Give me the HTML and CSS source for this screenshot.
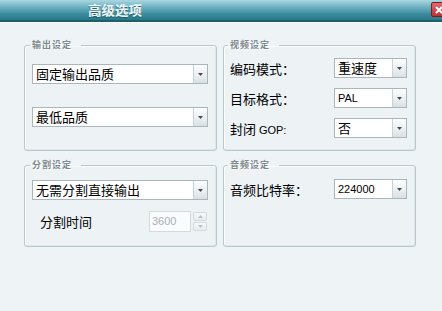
FILE: index.html
```html
<!DOCTYPE html>
<html>
<head>
<meta charset="utf-8">
<link rel="stylesheet" href="styles.css">
</head>
<body>
<div class="titlebar">
  <div class="title">高级选项</div>
  <div class="close"><svg width="8" height="8" viewBox="0 0 8 8"><path d="M1 1L7 7M7 1L1 7" stroke="#fff" stroke-width="2"/></svg></div>
</div>
<div class="content">
  <fieldset class="panel left">
    <legend>输出设定</legend>
    <div class="stack">
      <div class="combo"><span class="val cjk">固定输出品质</span><span class="btn"><svg width="5" height="3" viewBox="0 0 5 3"><path d="M0 0H5L2.5 3Z" fill="#4a4a4a"/></svg></span></div>
      <div class="combo"><span class="val cjk">最低品质</span><span class="btn"><svg width="5" height="3" viewBox="0 0 5 3"><path d="M0 0H5L2.5 3Z" fill="#4a4a4a"/></svg></span></div>
    </div>
  </fieldset>
  <fieldset class="panel right">
    <legend>视频设定</legend>
    <div class="rows">
      <div class="row"><span class="label">编码模式：</span><div class="combo small"><span class="val cjk">重速度</span><span class="btn"><svg width="5" height="3" viewBox="0 0 5 3"><path d="M0 0H5L2.5 3Z" fill="#4a4a4a"/></svg></span></div></div>
      <div class="row"><span class="label">目标格式：</span><div class="combo small"><span class="val latin">PAL</span><span class="btn"><svg width="5" height="3" viewBox="0 0 5 3"><path d="M0 0H5L2.5 3Z" fill="#4a4a4a"/></svg></span></div></div>
      <div class="row"><span class="label">封闭 <span class="latin-l">GOP:</span></span><div class="combo small"><span class="val cjk">否</span><span class="btn"><svg width="5" height="3" viewBox="0 0 5 3"><path d="M0 0H5L2.5 3Z" fill="#4a4a4a"/></svg></span></div></div>
    </div>
  </fieldset>
  <fieldset class="panel left bottom">
    <legend>分割设定</legend>
    <div class="combo"><span class="val cjk">无需分割直接输出</span><span class="btn"><svg width="5" height="3" viewBox="0 0 5 3"><path d="M0 0H5L2.5 3Z" fill="#4a4a4a"/></svg></span></div>
    <div class="spinrow">
      <span class="label">分割时间</span>
      <div class="spin">
        <div class="spinbox">3600</div>
        <div class="spinbtns">
          <span class="sb"><svg width="5" height="3" viewBox="0 0 5 3"><path d="M0 3H5L2.5 0Z" fill="#b8c2c6"/></svg></span>
          <span class="sb"><svg width="5" height="3" viewBox="0 0 5 3"><path d="M0 0H5L2.5 3Z" fill="#b8c2c6"/></svg></span>
        </div>
      </div>
    </div>
  </fieldset>
  <fieldset class="panel right bottom">
    <legend>音频设定</legend>
    <div class="row"><span class="label">音频比特率：</span><div class="combo small"><span class="val latin">224000</span><span class="btn"><svg width="5" height="3" viewBox="0 0 5 3"><path d="M0 0H5L2.5 3Z" fill="#4a4a4a"/></svg></span></div></div>
  </fieldset>
</div>
</body>
</html>
```
FILE: styles.css
```css
html, body {
  margin: 0;
  padding: 0;
}
body {
  width: 442px;
  height: 311px;
  overflow: hidden;
  background: #eef3f6;
  font-family: "Noto Sans CJK SC", "Noto Sans", sans-serif;
  color: #000;
}
.titlebar {
  height: 20px;
  display: flex;
  align-items: flex-start;
  background: linear-gradient(#a9d7e1 0%, #6fb2c1 35%, #3a8c9d 70%, #2a7888 100%);
  border-bottom: 2px solid #1e5f6c;
  box-shadow: 0 1px 0 #fafcfd;
  overflow: hidden;
}
.title {
  padding-left: 88px;
  font-size: 13px;
  font-weight: 700;
  line-height: 20px;
  color: #e9f5f8;
  text-shadow: 0 1px 1px #1e5664, 0.5px 0 0 #e9f5f8;
  letter-spacing: 0.5px;
  flex: 1;
}
.close {
  width: 14px;
  height: 13px;
  margin-top: 2px;
  margin-right: -5px;
  background: linear-gradient(#e06a6e, #b83338);
  border: 1px solid #7a1d22;
  border-radius: 2px;
  display: flex;
  align-items: center;
  justify-content: center;
}
.content {
  display: grid;
  grid-template-columns: 193px 193px;
  grid-template-rows: 111px 87px;
  column-gap: 6px;
  row-gap: 9px;
  padding: 18px 0 0 24px;
}
.panel {
  margin: 0;
  min-width: 0;
  border: 1px solid #b9c8cd;
  border-radius: 3px;
  box-shadow: inset 1px 1px 0 #fbfdfd, inset -1px -1px 0 #dfe7ea;
  background: #edf2f5;
  padding: 0 8px 0 7px;
}
.panel.right {
  padding-left: 6px;
}
legend {
  font-size: 9px;
  line-height: 10px;
  font-weight: bold;
  color: #7d8b90;
  letter-spacing: 1px;
  padding: 0 9px 0 2px;
  margin-left: -2px;
  text-shadow: 1px 1px 0 #fff;
}
.stack {
  display: flex;
  flex-direction: column;
  gap: 23px;
  padding-top: 14px;
}
.combo {
  height: 20px;
  box-sizing: border-box;
  border: 1px solid #a9b7bc;
  background: #fff;
  display: flex;
}
.combo .val {
  flex: 1;
  padding-left: 3px;
  line-height: 18px;
  white-space: nowrap;
  overflow: hidden;
}
.cjk {
  font-size: 13px;
}
.latin {
  font-family: "Liberation Sans", Arial, sans-serif;
  font-size: 11px;
}
.latin-l {
  font-family: "Liberation Sans", Arial, sans-serif;
  font-size: 11px;
}
.btn {
  width: 13px;
  border-left: 1px solid #c9d3d7;
  background: linear-gradient(#fdfefe, #e9eef0 60%, #d9e0e3);
  display: flex;
  align-items: center;
  justify-content: center;
}
.rows {
  display: flex;
  flex-direction: column;
  gap: 10px;
  padding-top: 8px;
}
.row {
  display: flex;
  align-items: center;
  justify-content: space-between;
  height: 20px;
}
.label {
  font-size: 13px;
  white-space: nowrap;
}
.combo.small {
  width: 73px;
}
.bottom .row {
  margin-top: 9px;
}
.bottom > .combo {
  margin-top: 10px;
}
.spinrow {
  display: flex;
  align-items: center;
  margin-top: 11px;
  height: 21px;
}
.spinrow .label {
  margin-left: 8px;
}
.spin {
  margin-left: auto;
  margin-right: 1px;
  display: flex;
  align-items: center;
  gap: 2px;
}
.spinbox {
  width: 42px;
  height: 21px;
  box-sizing: border-box;
  border: 1px solid #d2dadd;
  background: #fafbfc;
  color: #a9b2b6;
  font-family: "Liberation Sans", Arial, sans-serif;
  font-size: 11px;
  line-height: 19px;
  padding-left: 2px;
}
.spinbtns {
  display: flex;
  flex-direction: column;
  gap: 1px;
}
.sb {
  width: 14px;
  height: 9px;
  box-sizing: border-box;
  border: 1px solid #d3dbde;
  border-radius: 2px;
  background: linear-gradient(#f8fafb, #e6ecee);
  display: flex;
  align-items: center;
  justify-content: center;
}
```
